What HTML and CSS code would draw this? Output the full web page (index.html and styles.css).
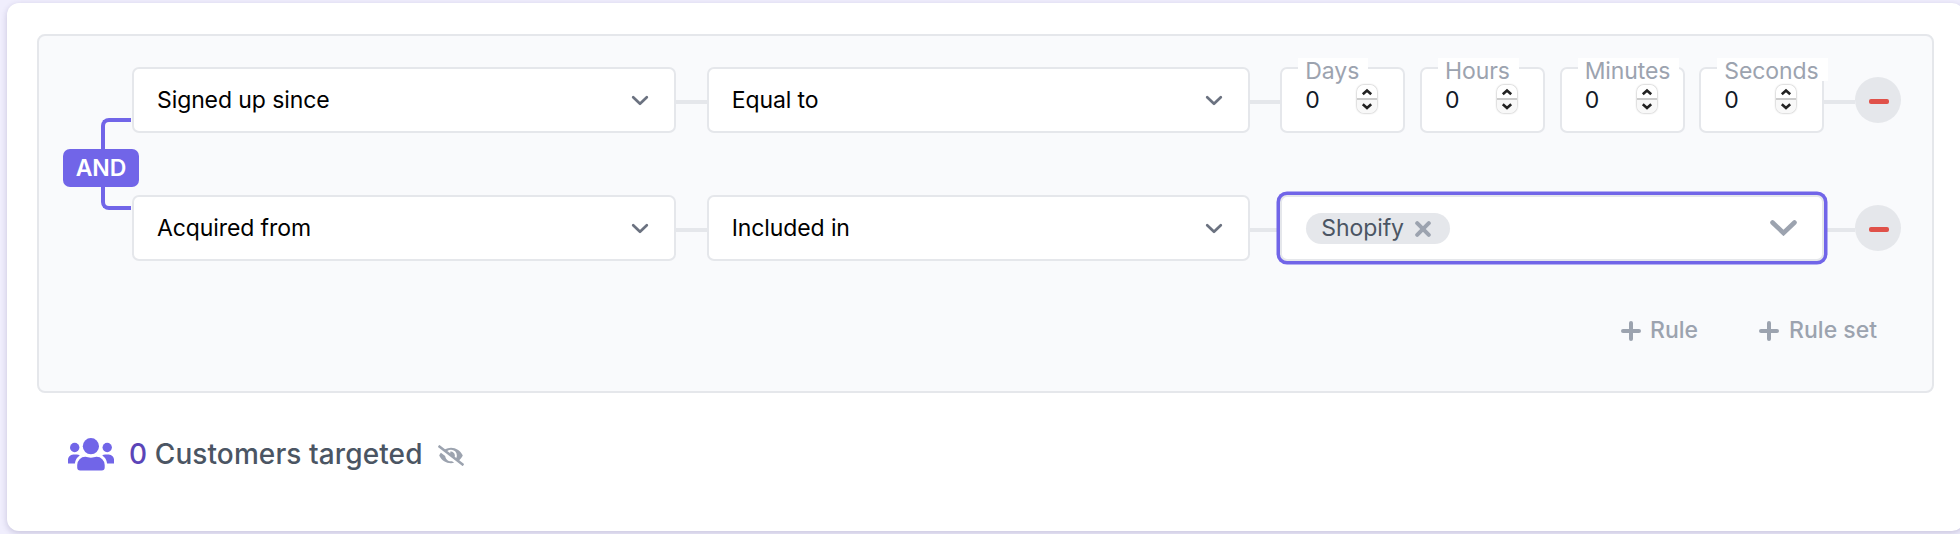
FILE: index.html
```html
<!DOCTYPE html>
<html lang="en">
<head>
<meta charset="utf-8">
<title>Customer targeting</title>
<link rel="stylesheet" href="styles.css">
</head>
<body>
<svg class="defs" width="0" height="0" aria-hidden="true">
  <symbol id="chevron" viewBox="0 0 18 12"><path d="M2.2 2.3 9 8.800l6.800-6.500" fill="none" stroke="currentColor" stroke-width="2.700" stroke-linecap="round" stroke-linejoin="round"/></symbol>
  <symbol id="spin" viewBox="0 0 20 28"><path d="M5.800 9.300 10 5.600 14.200 9.300M5.800 19.200 10 22.900l4.200-3.700" fill="none" stroke="#222" stroke-width="2.600"/></symbol>
  <symbol id="plus" viewBox="0 0 20 20"><path d="M10 2v16M2 10h16" fill="none" stroke="currentColor" stroke-width="4" stroke-linecap="round"/></symbol>
</svg>
<main class="card">
  <section class="panel">
    <div class="rules">
      <div class="join"><span class="badge">AND</span></div>
      <div class="rule">
        <div class="select"><span>Signed up since</span><svg class="chev"><use href="#chevron"/></svg></div>
        <i class="link"></i>
        <div class="select"><span>Equal to</span><svg class="chev"><use href="#chevron"/></svg></div>
        <i class="link"></i>
        <div class="durations">
          <div class="num"><label>Days</label><span>0</span><svg class="spin"><use href="#spin"/></svg></div>
          <div class="num"><label>Hours</label><span>0</span><svg class="spin"><use href="#spin"/></svg></div>
          <div class="num"><label>Minutes</label><span>0</span><svg class="spin"><use href="#spin"/></svg></div>
          <div class="num"><label>Seconds</label><span>0</span><svg class="spin"><use href="#spin"/></svg></div>
        </div>
        <i class="link"></i>
        <button class="remove"><i></i></button>
      </div>
      <div class="rule">
        <div class="select"><span>Acquired from</span><svg class="chev"><use href="#chevron"/></svg></div>
        <i class="link"></i>
        <div class="select"><span>Included in</span><svg class="chev"><use href="#chevron"/></svg></div>
        <i class="link"></i>
        <div class="multi">
          <span class="chip"><span>Shopify</span><svg class="x" viewBox="0 0 16 16"><path d="M2.200 2.200l11.600 11.600M13.800 2.200 2.200 13.800" fill="none" stroke="currentColor" stroke-width="4" stroke-linecap="round"/></svg></span>
          <svg class="bigchev" viewBox="0 0 27 16"><path d="M2.500 2.500 13.500 13l11-10.500" fill="none" stroke="currentColor" stroke-width="4.600" stroke-linecap="round" stroke-linejoin="miter"/></svg>
        </div>
        <i class="link"></i>
        <button class="remove"><i></i></button>
      </div>
    </div>
    <div class="actions">
      <button class="add"><svg class="plus"><use href="#plus"/></svg><span>Rule</span></button>
      <button class="add"><svg class="plus"><use href="#plus"/></svg><span>Rule set</span></button>
    </div>
  </section>
  <footer class="summary">
    <svg class="users" viewBox="0 0 46 33"><g fill="currentColor"><circle cx="6.700" cy="9.500" r="4.700"/><circle cx="39.200" cy="9.500" r="4.700"/><circle cx="22.900" cy="8.200" r="8.100"/><path d="M0 25.500V22a5.200 5.200 0 0 1 5.200-5.500h3.600c1.200 0 2.200.3 3 .9-2.800 1.700-4.500 4.400-4.900 8.100zM46 25.500V22a5.200 5.200 0 0 0-5.200-5.500h-3.600c-1.200 0-2.200.3-3 .9 2.800 1.700 4.500 4.400 4.900 8.100z"/><path d="M9.200 29.500V27a8.100 8.100 0 0 1 8.300-8.200c1.700 0 3.100 1 5.400 1s3.800-1 5.500-1a8.100 8.100 0 0 1 8.300 8.200v2.500a3 3 0 0 1-3 3H12.200a3 3 0 0 1-3-3z"/></g></svg>
    <p><span class="count">0</span> Customers targeted</p>
    <svg class="eye" viewBox="0 0 640 512"><path fill="currentColor" d="M320 400c-75.900 0-137.300-58.700-142.900-133.100L72.200 185.800c-13.800 17.300-26.500 35.600-36.700 55.600a32.400 32.400 0 0 0 0 29.200C89.700 376.400 197.100 448 320 448c26.900 0 52.900-4 77.900-10.500L346 397.400a144.100 144.100 0 0 1-26 2.600zm313.800 58.100-110.600-85.400a331.300 331.300 0 0 0 81.300-102.100 32.400 32.400 0 0 0 0-29.200C550.300 135.600 442.900 64 320 64a308.200 308.200 0 0 0-147.300 37.700L45.500 3.400A16 16 0 0 0 23 6.200L3.400 31.500A16 16 0 0 0 6.200 53.900l588.400 454.700a16 16 0 0 0 22.400-2.800l19.600-25.300a16 16 0 0 0-2.800-22.400zM450.200 316.300l-39.300-30.400A94.800 94.800 0 0 0 416 256a94.800 94.800 0 0 0-121.300-92.200A47.700 47.700 0 0 1 304 192a46.600 46.600 0 0 1-1.500 10l-73.600-56.900A142.300 142.300 0 0 1 320 112a143.900 143.900 0 0 1 144 144c0 21.600-5.300 41.800-13.800 60.300z"/></svg>
  </footer>
</main>
</body>
</html>
```
FILE: styles.css
```css
* { box-sizing: border-box; }
html { height: 534px; overflow: hidden; background: #f0eefd; }
body {
  margin: 0;
  padding: 3px 0 0 7px;
  height: 534px;
  overflow: hidden;
  font: 400 23px/34px Inter, "Liberation Sans", sans-serif;
  letter-spacing: -.1px;
  color: #000;
}
.defs { position: absolute; }
svg { display: block; flex: none; }
button { border: 0; padding: 0; background: none; font: inherit; }

.card {
  width: 1957px;
  height: 528px;
  padding: 31px 0 0 30px;
  background: #fff;
  border-radius: 12px;
  box-shadow: 0 2px 6px rgba(40, 30, 90, .2);
}
.panel {
  width: 1897px;
  height: 359px;
  padding: 31px 31px 0 93px;
  background: #f9fafc;
  border: 2px solid #e5e7eb;
  border-radius: 8px;
}
.rules { position: relative; display: flex; flex-direction: column; gap: 62px; }
.rule { display: flex; align-items: center; height: 66px; }

/* bracket that ties the two rules together */
.join {
  position: absolute;
  left: -31px;
  top: 51px;
  width: 30px;
  height: 92px;
  border: 4px solid #7165e8;
  border-right: 0;
  border-radius: 8px 0 0 8px;
}
.badge {
  position: absolute;
  left: -42px;
  top: 27px;
  width: 76px;
  height: 38px;
  border-radius: 7px;
  background: #7165e8;
  color: #fff;
  font-weight: 600;
  line-height: 38px;
  text-align: center;
}

.select {
  display: flex;
  align-items: center;
  justify-content: space-between;
  width: 543px;
  height: 66px;
  padding: 0 25px 0 23px;
  background: #fff;
  border: 2px solid #e5e7eb;
  border-radius: 7px;
}
.select:first-child { width: 544px; }
.chev { width: 18px; height: 12px; margin-top: 2px; color: #6b7280; }
.link { flex: 1; height: 4px; margin-top: 4px; background: #e5e7eb; }

.durations { display: flex; justify-content: space-between; width: 544px; }
.num {
  position: relative;
  display: flex;
  justify-content: space-between;
  width: 125px;
  height: 66px;
  padding: 14px 26px 0 23px;
  background: #fff;
  border: 2px solid #e5e7eb;
  border-radius: 7px;
  color: #111827;
}
.num label {
  position: absolute;
  left: 16px;
  top: -11px;
  height: 23px;
  padding: 0 9px 0 7px;
  background: #fff;
  color: #9ca3af;
  line-height: 26px;
}
.spin {
  width: 20px;
  height: 28px;
  margin-top: 2px;
  border-radius: 7px;
  background: linear-gradient(#fff 13px, #ccc 13px, #ccc 15px, #f8f8f8 15px);
  box-shadow: 0 0 2px rgba(0, 0, 0, .45);
}

.multi {
  position: relative;
  z-index: 1;
  display: flex;
  align-items: center;
  justify-content: space-between;
  width: 544px;
  height: 66px;
  padding: 0 25px 0 24px;
  background: #fff;
  border: 2px solid #e5e7eb;
  border-radius: 7px;
  box-shadow: 0 0 0 3.500px #7165e8;
}
.chip {
  display: flex;
  align-items: center;
  gap: 12px;
  width: 144px;
  height: 31px;
  padding-left: 15px;
  border-radius: 16px;
  background: #e5e7eb;
  color: #4b5563;
}
.x { width: 16px; height: 16px; margin: 2px 0 0 -1px; color: #9ca3af; }
.bigchev { width: 27px; height: 16px; color: #9ca3af; }

.remove {
  display: flex;
  align-items: center;
  justify-content: center;
  width: 46px;
  height: 46px;
  border-radius: 50%;
  background: #e5e7eb;
}
.remove i { width: 20px; height: 5px; margin: 3px 0 0 2px; border-radius: 2px; background: #e05149; }

.actions { display: flex; justify-content: flex-end; gap: 61px; margin: 52px 24px 0 0; }
.add { display: flex; align-items: center; gap: 10px; color: #9ca3af; font-weight: 500; }
.add:first-child { gap: 9px; }
.plus { width: 20px; height: 20px; margin-top: 2px; }

.summary {
  display: flex;
  align-items: center;
  height: 40px;
  margin: 41px 0 0 31px;
  color: #4b5563;
  font-size: 28px;
  font-weight: 500;
  letter-spacing: .1px;
}
.summary p { margin: 0; }
.users { width: 46px; height: 33px; margin-right: 15px; color: #7165e8; }
.count { color: #5b45b8; }
.eye { width: 26px; height: 21px; margin: 2px 0 0 15px; color: #9ca3af; }
```
